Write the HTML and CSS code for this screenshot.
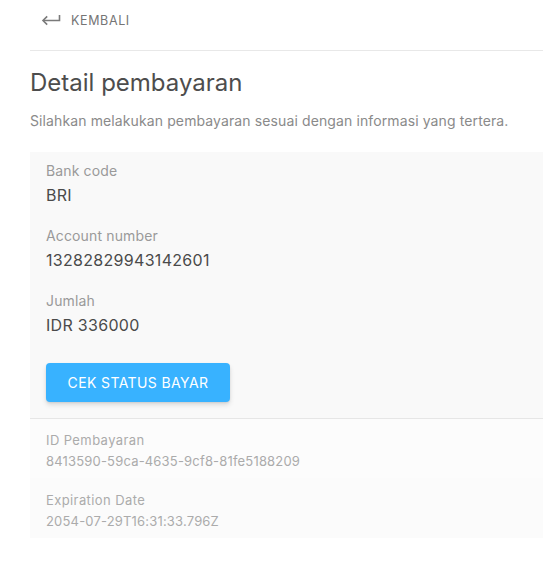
FILE: index.html
```html
<!DOCTYPE html>
<html lang="id">
<head>
<meta charset="utf-8">
<title>Detail pembayaran</title>
<link rel="stylesheet" href="styles.css">
</head>
<body>
<div class="page">
  <div class="topbar">
    <a class="back" href="#">
      <svg class="back-icon" width="20" height="12" viewBox="0 0 20 12" aria-hidden="true">
        <path d="M18.5 1v5.5H2.2" fill="none" stroke="#7a7a7a" stroke-width="1.6"/>
        <path d="M6.2 2.4L2 6.5l4.2 4.1" fill="none" stroke="#7a7a7a" stroke-width="1.6"/>
      </svg>
      <span>KEMBALI</span>
    </a>
  </div>
  <h1 class="title">Detail pembayaran</h1>
  <p class="subtitle">Silahkan melakukan pembayaran sesuai dengan informasi yang tertera.</p>
  <div class="panel">
    <div class="panel-main">
      <div class="field">
        <div class="label">Bank code</div>
        <div class="value">BRI</div>
      </div>
      <div class="field">
        <div class="label">Account number</div>
        <div class="value">13282829943142601</div>
      </div>
      <div class="field">
        <div class="label">Jumlah</div>
        <div class="value">IDR 336000</div>
      </div>
      <button class="btn" type="button">CEK STATUS BAYAR</button>
    </div>
    <div class="panel-meta">
      <div class="meta meta-a">
        <div class="meta-label">ID Pembayaran</div>
        <div class="meta-value">8413590-59ca-4635-9cf8-81fe5188209</div>
      </div>
      <div class="meta meta-b">
        <div class="meta-label">Expiration Date</div>
        <div class="meta-value">2054-07-29T16:31:33.796Z</div>
      </div>
    </div>
  </div>
</div>
</body>
</html>
```

FILE: styles.css
```css
* { box-sizing: border-box; }
html, body { margin: 0; padding: 0; background: #fff; }
body {
  font-family: Inter, "Noto Sans", "Liberation Sans", sans-serif;
  color: #444;
}
.page {
  padding-left: 30px;
  display: flex;
  flex-direction: column;
}
.topbar {
  height: 51px;
  border-bottom: 1px solid #e8e8e8;
  padding-top: 10px;
}
.back {
  display: inline-flex;
  align-items: center;
  gap: 10px;
  padding-left: 11px;
  height: 17px;
  text-decoration: none;
  color: #757575;
  font-size: 12.5px;
  letter-spacing: 0.05em;
}
.back-icon { display: block; }
.title {
  margin: 16px 0 0;
  font-size: 24px;
  line-height: 32px;
  font-weight: 400;
  color: #4d4d4d;
}
.subtitle {
  margin: 12px 0 0;
  font-size: 14px;
  line-height: 20px;
  color: #8a8a8a;
  letter-spacing: 0.008em;
}
.panel {
  margin-top: 21px;
  background: #f9f9f9;
}
.panel-main {
  padding: 9px 16px 16px;
  display: flex;
  flex-direction: column;
  align-items: flex-start;
  gap: 19px;
  border-bottom: 1px solid #e6e6e6;
}
.field { display: flex; flex-direction: column; gap: 2px; }
.label {
  font-size: 14px;
  line-height: 20px;
  color: #9a9a9a;
  letter-spacing: 0.01em;
}
.value {
  font-size: 16px;
  line-height: 24px;
  color: #4a4a4a;
  letter-spacing: 0.3px;
}
.btn {
  margin-top: 7px;
  width: 184px;
  height: 39px;
  border: 0;
  border-radius: 4px;
  background: #38b2ff;
  color: #fff;
  font-family: inherit;
  font-size: 14px;
  letter-spacing: 0.028em;
  box-shadow: 0 3px 5px rgba(0,0,0,0.12), 0 1px 2px rgba(0,0,0,0.08);
}
.panel-meta { background: #fcfcfc; }
.meta {
  padding: 12px 16px 8px;
  display: flex;
  flex-direction: column;
  gap: 3px;
}
.meta-b { padding-top: 13px; background: #fbfbfb; }
.meta-label {
  font-size: 13px;
  line-height: 18px;
  color: #ababab;
  letter-spacing: 0.4px;
}
.meta-value {
  font-size: 13px;
  line-height: 18px;
  color: #ababab;
  letter-spacing: 0.18px;
}
```
